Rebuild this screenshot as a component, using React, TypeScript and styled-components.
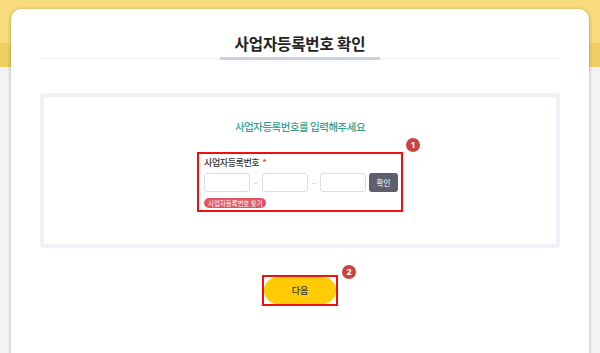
import React from "react";
import styled, { createGlobalStyle } from "styled-components";

const Global = createGlobalStyle`
  html, body { margin: 0; padding: 0; }
  body {
    width: 600px;
    height: 353px;
    overflow: hidden;
    font-family: "Noto Sans CJK KR", "Noto Sans", sans-serif;
    background: linear-gradient(to bottom, #f9dc7b 0 43px, #f1d063 43px 67px, #f4f4f7 67px);
  }
`;

const Page = styled.div`
  padding: 9px 11px 0 11px;
  height: 353px;
  box-sizing: border-box;
`;

const Card = styled.div`
  background: #fff;
  border-radius: 10px;
  box-shadow: 0 1px 4px rgba(20, 20, 60, 0.35);
  height: 360px;
  padding: 0 29px;
  box-sizing: border-box;
`;

const Header = styled.div`
  display: flex;
  justify-content: center;
  padding-top: 24px;
  border-bottom: 1px solid #eef0f3;
`;

const Title = styled.h1`
  margin: 0 0 -2px;
  padding: 0 15px 4px;
  font-size: 15.5px;
  line-height: 20px;
  font-weight: 700;
  color: #222;
  letter-spacing: -0.1px;
  border-bottom: 3px solid #c9d1dc;
  border-radius: 1px;
`;

const FormBox = styled.div`
  margin-top: 34px;
  height: 155px;
  box-sizing: border-box;
  border: 4px solid #eef2f7;
  border-radius: 3px;
  display: flex;
  flex-direction: column;
  align-items: center;
  padding-top: 22px;
`;

const Subtitle = styled.p`
  margin: 0;
  font-size: 10.5px;
  line-height: 16px;
  font-weight: 500;
  color: #33a08f;
  letter-spacing: -0.5px;
`;

const Highlight = styled.div`
  position: relative;
  margin-top: 17px;
  width: 206px;
  box-sizing: border-box;
  border: 2px solid #ee1111;
  padding: 3px 5px 2px;
  display: flex;
  flex-direction: column;
  align-items: flex-start;
`;

const Badge = styled.span<{ $top: number; $right: number }>`
  position: absolute;
  top: ${(p) => p.$top}px;
  right: ${(p) => p.$right}px;
  width: 14px;
  height: 14px;
  border-radius: 50%;
  background: #c8453f;
  color: #fff;
  font-family: "Noto Sans", sans-serif;
  font-size: 9px;
  font-weight: 700;
  line-height: 14px;
  text-align: center;
`;

const Label = styled.div`
  font-size: 9px;
  line-height: 12px;
  font-weight: 500;
  color: #333;
  letter-spacing: -0.4px;
`;

const Required = styled.span`
  color: #e83a4a;
  margin-left: 3px;
`;

const InputRow = styled.div`
  display: flex;
  align-items: center;
  margin-top: 4px;
`;

const Field = styled.input`
  width: 46px;
  height: 19px;
  box-sizing: border-box;
  border: 1px solid #dcdde2;
  border-radius: 3px;
  padding: 0 3px;
  outline: none;
  font-size: 9px;
`;

const Dash = styled.span`
  width: 12px;
  text-align: center;
  font-size: 8px;
  color: #aaa;
`;

const CheckButton = styled.button`
  margin-left: 3px;
  width: 29px;
  height: 19px;
  border: none;
  border-radius: 3px;
  background: #5e5f6c;
  color: #fff;
  font-family: inherit;
  font-size: 7.5px;
  padding: 0;
`;

const FindPill = styled.span`
  margin-top: 6px;
  height: 10px;
  line-height: 10px;
  padding: 0 4px;
  border-radius: 5px;
  background: #e15563;
  color: #fff;
  font-size: 6.5px;
  letter-spacing: -0.1px;
`;

const Footer = styled.div`
  display: flex;
  justify-content: center;
  margin-top: 27px;
`;

const NextWrap = styled.div`
  position: relative;
  border: 2px solid #ee1111;
  width: 76px;
  height: 31px;
  box-sizing: border-box;
  display: flex;
  align-items: center;
  justify-content: center;
`;

const NextButton = styled.button`
  width: 72px;
  height: 27px;
  border: none;
  border-radius: 14px;
  background: #ffcb05;
  color: #333;
  font-family: inherit;
  font-size: 9px;
  font-weight: 500;
  padding: 0;
`;

export default function App() {
  return (
    <>
      <Global />
      <Page>
        <Card>
          <Header>
            <Title>사업자등록번호 확인</Title>
          </Header>
          <FormBox>
            <Subtitle>사업자등록번호를 입력해주세요</Subtitle>
            <Highlight>
              <Badge $top={-16} $right={-19}>1</Badge>
              <Label>
                사업자등록번호<Required>*</Required>
              </Label>
              <InputRow>
                <Field />
                <Dash>-</Dash>
                <Field />
                <Dash>-</Dash>
                <Field />
                <CheckButton>확인</CheckButton>
              </InputRow>
              <FindPill>사업자등록번호 찾기</FindPill>
            </Highlight>
          </FormBox>
          <Footer>
            <NextWrap>
              <Badge $top={-12} $right={-20}>2</Badge>
              <NextButton>다음</NextButton>
            </NextWrap>
          </Footer>
        </Card>
      </Page>
    </>
  );
}
